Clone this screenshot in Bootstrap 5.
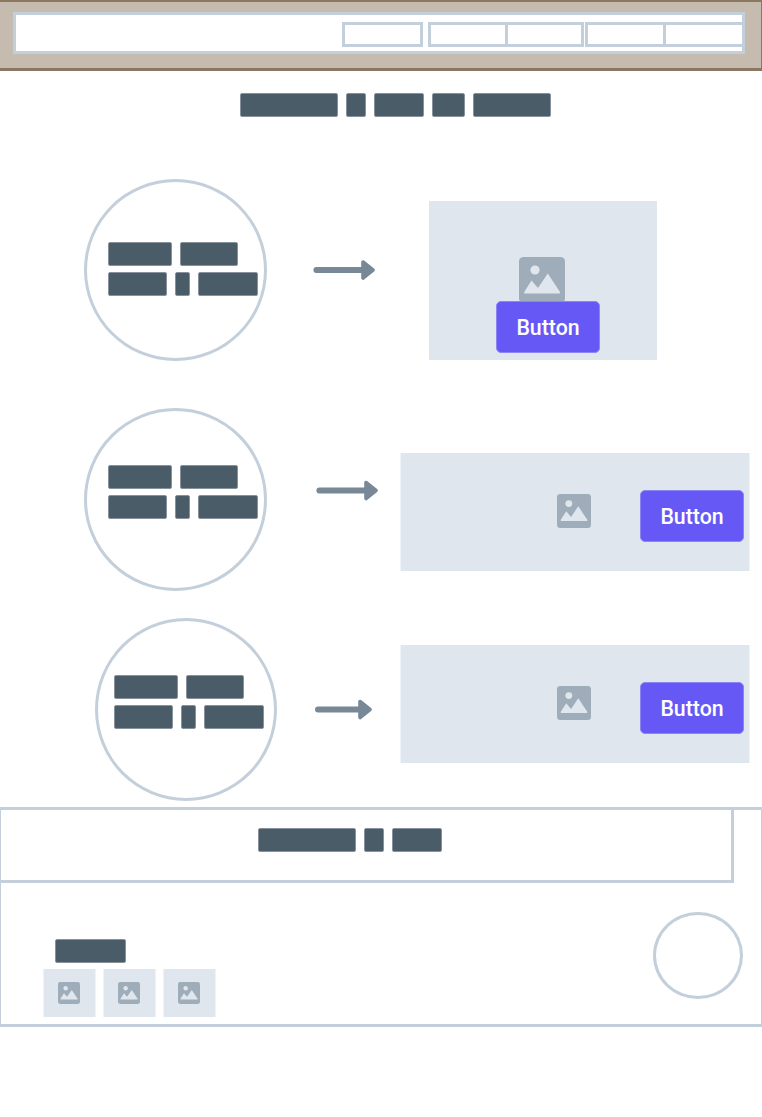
<!DOCTYPE html>
<html lang="en">
<head>
<meta charset="utf-8">
<meta name="viewport" content="width=device-width, initial-scale=1">
<title>Wireframe</title>
<link href="https://cdn.jsdelivr.net/npm/bootstrap@5.3.0/dist/css/bootstrap.min.css" rel="stylesheet">
<style>
  :root { --line:#c3cfda; --ink:#4b5c69; --tile:#dfe6ed; --glyph:#9eadb9; }
  body { font-family: Roboto, "Liberation Sans", sans-serif; background:#fff; overflow-x:hidden; }
  svg { display:block; flex:none; }

  /* top bar */
  .topbar { height:71px; background:#c5bcaf; border:solid #8c7860; border-width:2px 1px 3px 0; padding:10px 16px 0 13px; }
  .topbar-inner { height:42px; border:3px solid var(--line); padding:7px 0 0; }
  .slot { height:25px; border:3px solid var(--line); flex:none; }
  .s1 { width:81px; margin-right:5px; } .s2 { width:80px; }
  .s3 { width:79px; margin-left:-3px; margin-right:1px; } .s4 { width:81px; }
  .s5 { width:82px; margin-left:-3px; margin-right:-3px; }

  /* redacted words */
  .words { gap:8px; }
  .word { height:24px; background:var(--ink); border:1px solid #8792 9d; border:1px solid #87929d; border-radius:2px; flex:none; }
  .w15{width:15px}.w20{width:20px}.w33{width:33px}.w50{width:50px}.w58{width:58px}.w59{width:59px}
  .w60{width:60px}.w64{width:64px}.w71{width:71px}.w78{width:78px}.w98{width:98px}
  .page-title { height:108px; padding:22px 0 0 240px; }

  /* steps */
  .step-1 { height:229px; } .step-2 { height:210px; } .step-3 { height:189px; }
  .ring { width:183px; height:183px; border:3px solid var(--line); border-radius:50%; flex:none; margin-left:84px; padding:54px 0 0 21px; }
  .step-1 .ring { padding-top:60px; height:182px; }
  .step-3 .ring { margin-left:95px; padding-left:16px; width:182px; margin-right:1px; }
  .ring .words + .words { margin-top:6px; }
  .step-1 .arrow { margin:81px 0 0 46px; }
  .step-2 .arrow { margin:72px 0 0 49px; }
  .step-3 .arrow { margin:81px 0 0 37px; }
  .tile { background:var(--tile); flex:none; }
  .tile-tall { width:228px; height:159px; margin:22px 0 0 54px; padding-top:56px; }
  .tile-wide { width:350px; height:118px; border:solid #eff2f6; border-width:0 1px; margin-left:22px; padding:37px 5px 0 156px; }
  .step-2 .tile-wide { margin-top:45px; }
  .step-3 .tile-wide { margin:27px 0 0 28px; }
  .tile-tall svg { margin-left:-2px; }
  .tile-wide svg { margin-top:4px; }
  .btn-main { --bs-btn-color:#fff; --bs-btn-bg:#6658f5; --bs-btn-border-color:#8e84f5; --bs-btn-hover-bg:#5648e0; --bs-btn-hover-color:#fff;
    width:104px; height:52px; border-radius:5px; font-size:21.3px; font-weight:500; line-height:52px; padding:0; flex:none; }
  .tile-tall .btn-main { margin:-2px 0 0 10px; }

  /* footer */
  .foot { height:220px; border:solid var(--line); border-width:3px 1px; }
  .foot-head { width:734px; height:76px; margin:-3px 0 0 -1px; border:solid var(--line); border-width:3px 3px 3px 1px; padding:18px 0 0 257px; }
  .foot-left { padding:56px 0 0 42px; }
  .foot-left .word { margin-left:12px; }
  .thumbs { gap:7px; margin-top:6px; }
  .thumb { width:53px; height:48px; border:solid #eff2f6; border-width:0 1px; padding:13px 0 0 14px; }
  .foot-oval { width:90px; height:87px; border:3px solid var(--line); border-radius:50%; margin:29px 18px 0 0; }
</style>
</head>
<body>
<svg width="0" height="0" class="position-absolute" aria-hidden="true">
  <symbol id="pic" viewBox="0 0 46 46">
    <rect width="46" height="46" rx="4.5" fill="#9eadb9"/>
    <circle cx="16" cy="13" r="4.6" fill="#dfe6ed"/>
    <path d="M5.5 36.5 Q4.8 36.3 5.2 35 L12.5 23.5 L19 31 L28.8 16.5 L41 35 Q41.3 36.3 40.5 36.5Z" fill="#dfe6ed"/>
  </symbol>
</svg>

<header class="topbar">
  <nav class="topbar-inner bg-white d-flex justify-content-end align-items-start">
    <div class="slot s1"></div><div class="slot s2"></div><div class="slot s3"></div><div class="slot s4"></div><div class="slot s5"></div>
  </nav>
</header>

<main>
  <div class="page-title words d-flex">
    <span class="word w98"></span><span class="word w20"></span><span class="word w50"></span><span class="word w33"></span><span class="word w78"></span>
  </div>

  <section class="step-1 d-flex align-items-start">
    <div class="ring">
      <div class="words d-flex"><span class="word w64"></span><span class="word w58"></span></div>
      <div class="words d-flex"><span class="word w59"></span><span class="word w15"></span><span class="word w60"></span></div>
    </div>
    <svg class="arrow" width="62" height="20" viewBox="0 0 62 20"><path d="M3.4 10H52" stroke="#788896" stroke-width="6" stroke-linecap="round"/><path d="M50 2L60 10L50 18Z" fill="#788896" stroke="#788896" stroke-width="3.6" stroke-linejoin="round"/></svg>
    <div class="tile tile-tall d-flex flex-column align-items-center">
      <svg width="46" height="46"><use href="#pic"/></svg>
      <button class="btn btn-main position-relative" type="button">Button</button>
    </div>
  </section>

  <section class="step-2 d-flex align-items-start">
    <div class="ring">
      <div class="words d-flex"><span class="word w64"></span><span class="word w58"></span></div>
      <div class="words d-flex"><span class="word w59"></span><span class="word w15"></span><span class="word w60"></span></div>
    </div>
    <svg class="arrow" width="62" height="21" viewBox="0 0 62 21"><path d="M3.4 10.5H52" stroke="#788896" stroke-width="6" stroke-linecap="round"/><path d="M50 2.5L60 10.5L50 18.5Z" fill="#788896" stroke="#788896" stroke-width="3.6" stroke-linejoin="round"/></svg>
    <div class="tile tile-wide d-flex justify-content-between align-items-start">
      <svg width="34" height="34"><use href="#pic"/></svg>
      <button class="btn btn-main" type="button">Button</button>
    </div>
  </section>

  <section class="step-3 d-flex align-items-start">
    <div class="ring">
      <div class="words d-flex"><span class="word w64"></span><span class="word w58"></span></div>
      <div class="words d-flex"><span class="word w59"></span><span class="word w15"></span><span class="word w60"></span></div>
    </div>
    <svg class="arrow" width="57" height="21" viewBox="0 0 57 21"><path d="M3 10.5H47" stroke="#788896" stroke-width="6" stroke-linecap="round"/><path d="M45 2.5L55 10.5L45 18.5Z" fill="#788896" stroke="#788896" stroke-width="3.6" stroke-linejoin="round"/></svg>
    <div class="tile tile-wide d-flex justify-content-between align-items-start">
      <svg width="34" height="34"><use href="#pic"/></svg>
      <button class="btn btn-main" type="button">Button</button>
    </div>
  </section>
</main>

<footer class="foot">
  <div class="foot-head words d-flex">
    <span class="word w98"></span><span class="word w20"></span><span class="word w50"></span>
  </div>
  <div class="d-flex justify-content-between align-items-start">
    <div class="foot-left">
      <div class="word w71"></div>
      <div class="thumbs d-flex">
        <div class="tile thumb"><svg width="22" height="22"><use href="#pic"/></svg></div>
        <div class="tile thumb"><svg width="22" height="22"><use href="#pic"/></svg></div>
        <div class="tile thumb"><svg width="22" height="22"><use href="#pic"/></svg></div>
      </div>
    </div>
    <div class="foot-oval"></div>
  </div>
</footer>
<script src="https://cdn.jsdelivr.net/npm/bootstrap@5.3.0/dist/js/bootstrap.bundle.min.js"></script>
</body>
</html>
